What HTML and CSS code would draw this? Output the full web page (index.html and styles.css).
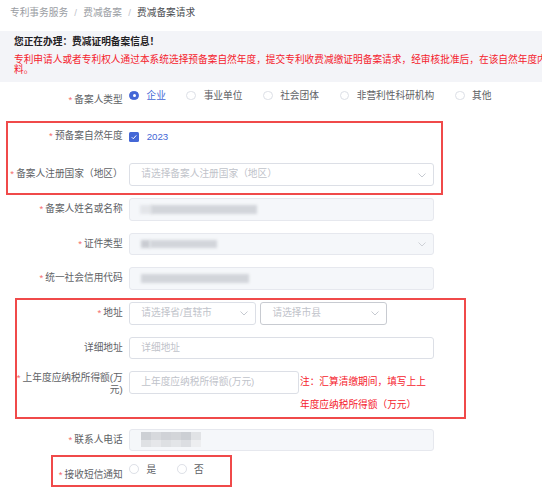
FILE: index.html
```html
<!DOCTYPE html>
<html lang="zh-CN">
<head>
<meta charset="utf-8">
<title>费减备案请求</title>
<link rel="stylesheet" href="styles.css">
</head>
<body>
<div class="page">
  <div class="crumbs">
    <span class="crumb">专利事务服务</span><span class="sep">/</span><span class="crumb">费减备案</span><span class="sep">/</span><span class="crumb current">费减备案请求</span>
  </div>

  <div class="notice">
    <div class="notice-title">您正在办理：费减证明备案信息！</div>
    <div class="notice-text">专利申请人或者专利权人通过本系统选择预备案自然年度，提交专利收费减缴证明备案请求，经审核批准后，在该自然年度内提出的费用减缴请求无需再提交费减证明材<br>料。</div>
  </div>

  <div class="form">
    <div class="row row-type">
      <label class="lbl req">备案人类型</label>
      <div class="radios up-a">
        <span class="radio checked"><i class="dot"></i><span>企业</span></span>
        <span class="radio"><i class="dot"></i><span>事业单位</span></span>
        <span class="radio"><i class="dot"></i><span>社会团体</span></span>
        <span class="radio"><i class="dot"></i><span>非营利性科研机构</span></span>
        <span class="radio"><i class="dot"></i><span>其他</span></span>
      </div>
    </div>

    <div class="row row-year">
      <label class="lbl req">预备案自然年度</label>
      <span class="check checked">
        <i class="box"><svg viewBox="0 0 10 10" width="10" height="10"><polyline points="2.8,5.2 4.4,6.8 7.4,3.4" fill="none" stroke="#fff" stroke-width="1"/></svg></i>
        <span>2023</span>
      </span>
    </div>

    <div class="row">
      <label class="lbl req">备案人注册国家（地区）</label>
      <div class="input select w-full"><span class="ph">请选择备案人注册国家（地区）</span><svg class="chev" viewBox="0 0 8 5" width="8" height="5"><polyline points="0.5,0.5 4,4 7.5,0.5" fill="none" stroke="#c0c4cc" stroke-width="0.9"/></svg></div>
    </div>

    <div class="row">
      <label class="lbl req">备案人姓名或名称</label>
      <div class="input disabled w-full"><span class="blur b-light" style="left:10px;width:12px"></span><span class="blur" style="left:21px;width:106px"></span></div>
    </div>

    <div class="row">
      <label class="lbl req">证件类型</label>
      <div class="input select disabled w-full"><span class="blur b-dark" style="left:11px;width:9px"></span><span class="blur" style="left:20px;width:67px"></span><svg class="chev" viewBox="0 0 8 5" width="8" height="5"><polyline points="0.5,0.5 4,4 7.5,0.5" fill="none" stroke="#c9ccd2" stroke-width="0.9"/></svg></div>
    </div>

    <div class="row">
      <label class="lbl req">统一社会信用代码</label>
      <div class="input disabled w-full"><span class="blur" style="left:11px;width:108px"></span></div>
    </div>

    <div class="row">
      <label class="lbl req">地址</label>
      <div class="pair">
        <div class="input select w-half"><span class="ph">请选择省/直辖市</span><svg class="chev" viewBox="0 0 8 5" width="8" height="5"><polyline points="0.5,0.5 4,4 7.5,0.5" fill="none" stroke="#c0c4cc" stroke-width="0.9"/></svg></div>
        <div class="input select w-half hover"><span class="ph">请选择市县</span><svg class="chev" viewBox="0 0 8 5" width="8" height="5"><polyline points="0.5,0.5 4,4 7.5,0.5" fill="none" stroke="#c0c4cc" stroke-width="0.9"/></svg></div>
      </div>
    </div>

    <div class="row">
      <label class="lbl">详细地址</label>
      <div class="input w-full"><span class="ph">详细地址</span></div>
    </div>

    <div class="row">
      <label class="lbl"><span class="lbl-narrow req">上年度应纳税所得额(万元)</span></label>
      <div class="input w-mid"><span class="ph">上年度应纳税所得额(万元)</span></div>
      <div class="note">注：汇算清缴期间，填写上上年度应纳税所得额（万元）</div>
    </div>

    <div class="row">
      <label class="lbl req">联系人电话</label>
      <div class="input disabled w-full">
        <span class="mosaic">
          <i style="background:#cdd0d5"></i><i style="background:#d7d9dd"></i><i style="background:#d0d2d7"></i><i style="background:#d3d5d9"></i><i style="background:#cccfd4"></i><i style="background:#e1e3e6"></i>
          <i style="background:#dfe1e4"></i><i style="background:#e6e7ea"></i><i style="background:#dee0e3"></i><i style="background:#e3e5e8"></i><i style="background:#dcdee2"></i><i style="background:#edeef0"></i>
        </span>
      </div>
    </div>

    <div class="row row-sms">
      <label class="lbl req">接收短信通知</label>
      <div class="radios up-b">
        <span class="radio"><i class="dot"></i><span>是</span></span>
        <span class="radio"><i class="dot"></i><span>否</span></span>
      </div>
    </div>
  </div>

  <div class="mark mark-1"></div>
  <div class="mark mark-2"></div>
  <div class="mark mark-3"></div>
</div>
</body>
</html>
```

FILE: styles.css
```css
html, body {
  margin: 0;
  padding: 0;
  background: #ffffff;
  overflow: hidden;
}

body {
  font-family: "Liberation Sans", "Noto Sans CJK SC", sans-serif;
  font-size: 9.7px;
  color: #606266;
}

.page {
  position: relative;
  width: 542px;
  height: 489px;
  overflow: hidden;
}

/* breadcrumb */
.crumbs {
  height: 30.7px;
  line-height: 26px;
  padding-left: 10px;
  white-space: nowrap;
}
.crumb { color: #9a9da3; }
.crumb.current { color: #4a4c51; }
.sep {
  color: #c0c4cc;
  margin: 0 6.2px;
}

/* notice band */
.notice {
  background: #f3f4f8;
  padding: 5.5px 14px 6.4px;
  overflow: hidden;
}
.notice-title {
  font-weight: 700;
  color: #1f2023;
  line-height: 12.4px;
}
.notice-text {
  margin-top: 6px;
  color: #f5222d;
  line-height: 10.5px;
  white-space: nowrap;
}

/* form */
.form {
  margin-top: 6.8px;
}
.row {
  display: flex;
  align-items: flex-start;
  margin-bottom: 12.25px;
}
.row-type { margin-bottom: 14.3px; }
.row-year { margin-bottom: 15.6px; }

.lbl {
  flex: 0 0 auto;
  box-sizing: border-box;
  width: 129.3px;
  padding-right: 6.6px;
  text-align: right;
  line-height: 22.4px;
  color: #606266;
  white-space: normal;
}
.req::before {
  content: "*";
  color: #f56c6c;
  margin-right: 2px;
}
.lbl-narrow {
  display: inline-block;
  width: 107px;
  line-height: 11.6px;
  vertical-align: top;
  padding-top: 0.6px;
}

/* inputs */
.input {
  position: relative;
  box-sizing: border-box;
  height: 22.4px;
  border: 1px solid #dcdfe6;
  border-radius: 3px;
  background: #fff;
  padding-left: 11px;
  line-height: 20.4px;
  white-space: nowrap;
  overflow: hidden;
}
.input.hover { border-color: #c8cbd1; }
.w-full { width: 305px; }
.w-half { width: 126.6px; }
.w-mid { width: 170px; }
.ph { color: #bfc3ca; }

.select .chev {
  position: absolute;
  right: 7px;
  top: 8.3px;
}

.disabled {
  background: #f5f7fa;
  border-color: #e6e8ee;
}
.blur {
  position: absolute;
  top: 6px;
  height: 8.5px;
  background: #d2d5da;
  filter: blur(1.4px);
}
.blur.b-light { background: #e3e5e9; }
.blur.b-dark { background: #c9ccd2; }

.mosaic {
  position: absolute;
  left: 11px;
  top: 2.3px;
  display: grid;
  grid-template-columns: repeat(6, 10px);
  grid-template-rows: 7.6px 7.6px;
  filter: blur(0.6px);
}
.mosaic i { display: block; }

.pair {
  display: flex;
  gap: 4.6px;
}

.note {
  width: 130px;
  margin-left: 0.7px;
  line-height: 22.6px;
  color: #f5222d;
}

/* radios */
.radios {
  display: flex;
  align-items: center;
  height: 22.4px;
}
.up-a { margin-top: -4.5px; }
.up-b { margin-top: -5.8px; }
.radio {
  display: inline-flex;
  align-items: center;
  margin-right: 20.6px;
  color: #606266;
}
.radio .dot {
  box-sizing: border-box;
  width: 9.8px;
  height: 9.8px;
  border: 1px solid #dcdfe6;
  border-radius: 50%;
  background: #fff;
  margin-right: 7.4px;
  position: relative;
}
.radio.checked .dot {
  border-color: #4467d6;
  background: #4467d6;
}
.radio.checked .dot::after {
  content: "";
  position: absolute;
  left: 50%;
  top: 50%;
  width: 3px;
  height: 3px;
  margin: -1.5px 0 0 -1.5px;
  border-radius: 50%;
  background: #fff;
}
.radio.checked span { color: #4467d6; }

/* checkbox */
.check {
  display: inline-flex;
  align-items: center;
  height: 22.4px;
  color: #4467d6;
}
.check .box {
  box-sizing: border-box;
  width: 9.8px;
  height: 9.8px;
  border-radius: 1.5px;
  background: #4467d6;
  margin-right: 7.6px;
  display: flex;
  align-items: center;
  justify-content: center;
}
.check .box svg { display: block; }

/* red annotation frames */
.mark {
  position: absolute;
  border: 2px solid #f04a4a;
  box-sizing: border-box;
  pointer-events: none;
}
.mark-1 { left: 6px; top: 120.5px; width: 437px; height: 74px; }
.mark-2 { left: 15px; top: 297.8px; width: 451px; height: 121px; }
.mark-3 { left: 51px; top: 455px; width: 180.5px; height: 32px; }
```
